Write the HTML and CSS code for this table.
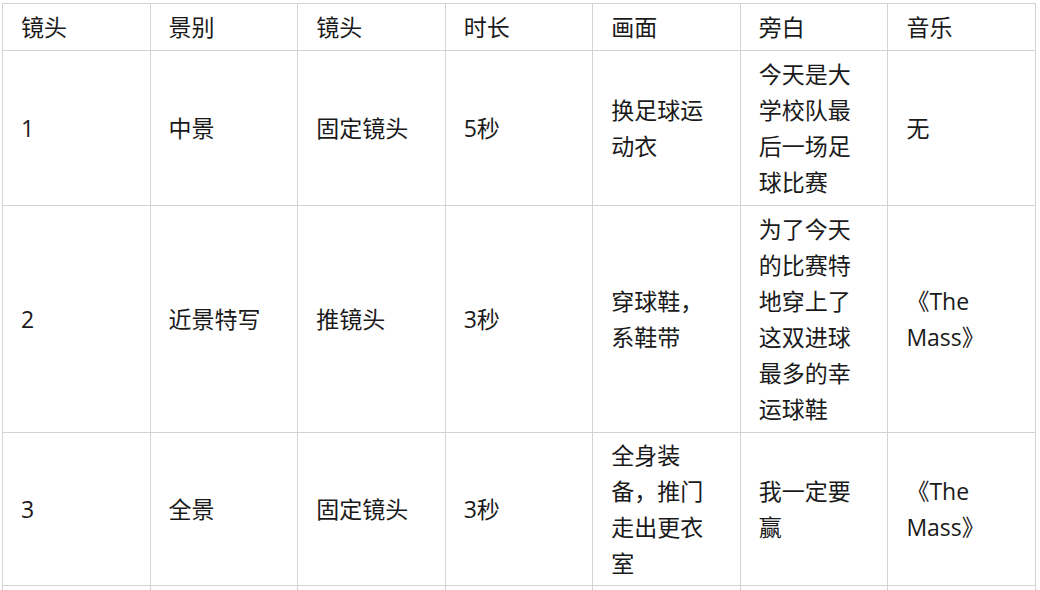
FILE: index.html
```html
<!DOCTYPE html>
<html lang="zh">
<head>
<meta charset="utf-8">
<link rel="stylesheet" href="styles.css">
</head>
<body>
<table class="shots">
  <thead>
    <tr>
      <th>镜头</th><th>景别</th><th>镜头</th><th>时长</th><th>画面</th><th>旁白</th><th>音乐</th>
    </tr>
  </thead>
  <tbody>
    <tr>
      <td>1</td><td>中景</td><td>固定镜头</td><td>5秒</td><td>换足球运动衣</td><td>今天是大学校队最后一场足球比赛</td><td>无</td>
    </tr>
    <tr>
      <td>2</td><td>近景特写</td><td>推镜头</td><td>3秒</td><td>穿球鞋，系鞋带</td><td>为了今天的比赛特地穿上了这双进球最多的幸运球鞋</td><td>《The Mass》</td>
    </tr>
    <tr>
      <td>3</td><td>全景</td><td>固定镜头</td><td>3秒</td><td>全身装备，推门走出更衣室</td><td>我一定要赢</td><td>《The Mass》</td>
    </tr>
    <tr class="spacer">
      <td></td><td></td><td></td><td></td><td></td><td></td><td></td>
    </tr>
  </tbody>
</table>
</body>
</html>
```

FILE: styles.css
```css
html, body {
  margin: 0;
  padding: 0;
  background: #ffffff;
}

body {
  font-family: "Open Sans", "Noto Sans CJK SC", sans-serif;
  font-size: 23px;
  line-height: 36px;
  color: #1a1a1a;
}

.shots {
  border-collapse: collapse;
  table-layout: fixed;
  width: 1034px;
  margin: 3px 0 0 2px;
}

.shots th,
.shots td {
  border: 1.5px solid #d3d3d3;
  padding: 5px 18px;
  text-align: left;
  vertical-align: middle;
  font-weight: normal;
}

.shots tbody tr:nth-child(3) td {
  padding-top: 4px;
  padding-bottom: 4px;
}

.spacer td {
  height: 60px;
}
```
